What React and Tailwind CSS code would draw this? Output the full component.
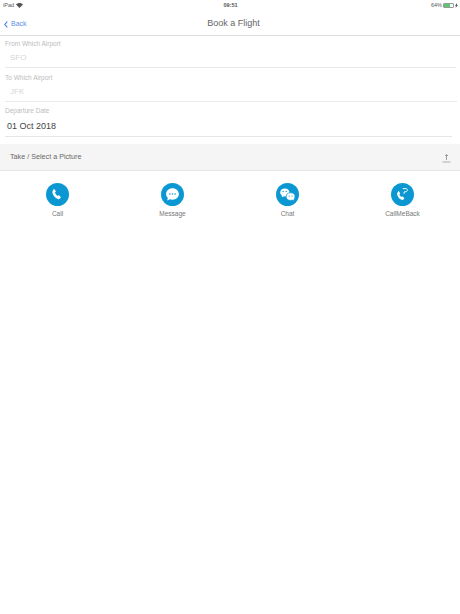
import React from 'react';

const Field = ({ label, value, dark, className }) => (
  <div className={className}>
    <div className="text-[6.5px] leading-[12px] text-[#bcbcbc]">{label}</div>
    <div
      className={
        dark
          ? 'pl-[2px] pt-[2px] h-[20px] text-[9px] leading-[14px] text-[#444] border-b border-[#e6e6e6]'
          : 'pl-[5px] pt-[1px] h-[18px] text-[8px] leading-[14px] text-[#d6d6d6] border-b border-[#e9e9e9]'
      }
    >
      {value}
    </div>
  </div>
);

const CallIcon = () => (
  <path
    d="M7.4 6.4c.4-.4.9-.4 1.2 0l1.1 1.6c.3.4.2.8-.2 1.1l-.6.5c.5 1.3 1.5 2.5 2.7 3.3l.7-.5c.4-.3.8-.2 1.1.2l1.2 1.4c.3.4.3.8-.1 1.1l-.8.7c-.5.4-1.2.5-1.8.2-2.8-1.2-4.9-3.6-5.5-6.6-.1-.6.1-1.3.5-1.8z"
    fill="#fff"
  />
);

const MessageIcon = () => (
  <>
    <path
      d="M11.5 5.2c-3.6 0-6.4 2.6-6.4 5.8 0 1.5.6 2.9 1.7 3.9l-.6 2.6 2.8-1.3c.8.3 1.6.5 2.5.5 3.6 0 6.4-2.6 6.4-5.7s-2.8-5.8-6.4-5.8z"
      fill="#fff"
    />
    <circle cx="8.9" cy="11" r=".8" fill="#0b98d2" />
    <circle cx="11.5" cy="11" r=".8" fill="#0b98d2" />
    <circle cx="14.1" cy="11" r=".8" fill="#0b98d2" />
  </>
);

const ChatIcon = () => (
  <>
    <ellipse cx="8.8" cy="9.4" rx="4.6" ry="4" fill="#fff" />
    <path d="M6.2 12l-.6 2.2 2.6-1.3z" fill="#fff" />
    <ellipse cx="14.6" cy="13.6" rx="4.4" ry="3.8" fill="#fff" stroke="#0b98d2" strokeWidth=".7" />
    <path d="M16.6 16.4l1.2 1.4-.2-2.2z" fill="#fff" />
    <circle cx="7.2" cy="8.4" r=".7" fill="#0b98d2" />
    <circle cx="10.2" cy="8.4" r=".7" fill="#0b98d2" />
    <circle cx="13.2" cy="13" r=".6" fill="#0b98d2" />
    <circle cx="16" cy="13" r=".6" fill="#0b98d2" />
  </>
);

const CallBackIcon = () => (
  <>
    <path
      d="M7 8.6c.4-.4.8-.4 1.1 0l.9 1.3c.3.4.2.7-.2 1l-.5.4c.4 1.1 1.2 2.1 2.2 2.7l.6-.4c.4-.3.7-.2 1 .2l1 1.2c.3.4.3.7-.1 1l-.7.6c-.5.4-1 .5-1.6.2-2.4-1-4.1-3-4.6-5.6-.1-.5.1-1.1.5-1.6z"
      fill="#fff"
    />
    <path
      d="M12.2 5.6h2.6c1 0 1.6.6 1.6 1.5s-.7 1.5-1.6 1.6l-1.6.2-.1 1.4"
      fill="none"
      stroke="#fff"
      strokeWidth="1"
      strokeLinecap="round"
      strokeLinejoin="round"
    />
  </>
);

const actions = [
  { name: 'Call', icon: <CallIcon /> },
  { name: 'Message', icon: <MessageIcon /> },
  { name: 'Chat', icon: <ChatIcon /> },
  { name: 'CallMeBack', icon: <CallBackIcon /> },
];

export default function App() {
  return (
    <div className="w-[460px] h-[614px] bg-white overflow-hidden font-['Liberation_Sans',sans-serif]">
      <div className="flex items-center justify-between h-[10px] pl-[3px] pr-[2px] text-[5.5px] text-[#555]">
        <div className="flex items-center gap-[2px] w-[100px]">
          <span>iPad</span>
          <svg width="7" height="5" viewBox="0 0 14 10">
            <path d="M7 10L0 3c4-4 10-4 14 0z" fill="#555" />
          </svg>
        </div>
        <span className="font-bold">09:51</span>
        <div className="flex items-center justify-end gap-[1px] w-[100px]">
          <span>64%</span>
          <div className="flex items-center h-[5px] w-[11px] border border-[#999] rounded-[1px]">
            <div className="h-full w-[6px] bg-[#5cc96e]" />
          </div>
          <svg width="3" height="5" viewBox="0 0 6 10">
            <path d="M4 0L0 6h2l-1 4 5-6H4z" fill="#555" />
          </svg>
        </div>
      </div>

      <div className="flex items-center justify-center relative h-[26px] pl-[7px] pt-[3px] border-b border-[#dedede]">
        <div className="absolute left-[4px] top-[9px] flex items-center gap-[3px] text-[#5b8fe8] text-[7px]">
          <svg width="4" height="7" viewBox="0 0 4 7">
            <path d="M3.3.7L.8 3.5l2.5 2.8" fill="none" stroke="#3f7fe8" strokeWidth="1.1" />
          </svg>
          <span>Back</span>
        </div>
        <span className="text-[9px] text-[#666]">Book a Flight</span>
      </div>

      <div className="pl-[5px] pt-[2px]">
        <Field label="From Which Airport" value="SFO" className="pr-[4px]" />
        <Field label="To Which Airport" value="JFK" className="pr-[3px] mt-[4px]" />
        <Field label="Departure Date" value="01 Oct 2018" dark className="pr-[8px] mt-[3px]" />
      </div>

      <div className="flex items-center justify-between h-[27px] mt-[7px] pl-[10px] pr-[9px] pt-[1px] bg-[#f6f5f5] border-b border-[#e6e6e6] text-[7.2px] text-[#666]">
        <span>Take / Select a Picture</span>
        <svg width="9" height="10" viewBox="0 0 9 10">
          <path d="M4.5 7V1.5M3 3l1.5-1.5L6 3" fill="none" stroke="#888" strokeWidth=".8" />
          <path d="M.5 9h8" stroke="#999" strokeWidth=".8" />
        </svg>
      </div>

      <div className="grid grid-cols-4 pt-[11.5px]">
        {actions.map((a) => (
          <div key={a.name} className="flex flex-col items-center">
            <svg width="23" height="23" viewBox="0 0 23 23">
              <circle cx="11.5" cy="11.5" r="11.5" fill="#0b98d2" />
              {a.icon}
            </svg>
            <span className="mt-[3px] text-[6.5px] leading-[10px] text-[#777]">{a.name}</span>
          </div>
        ))}
      </div>
    </div>
  );
}
